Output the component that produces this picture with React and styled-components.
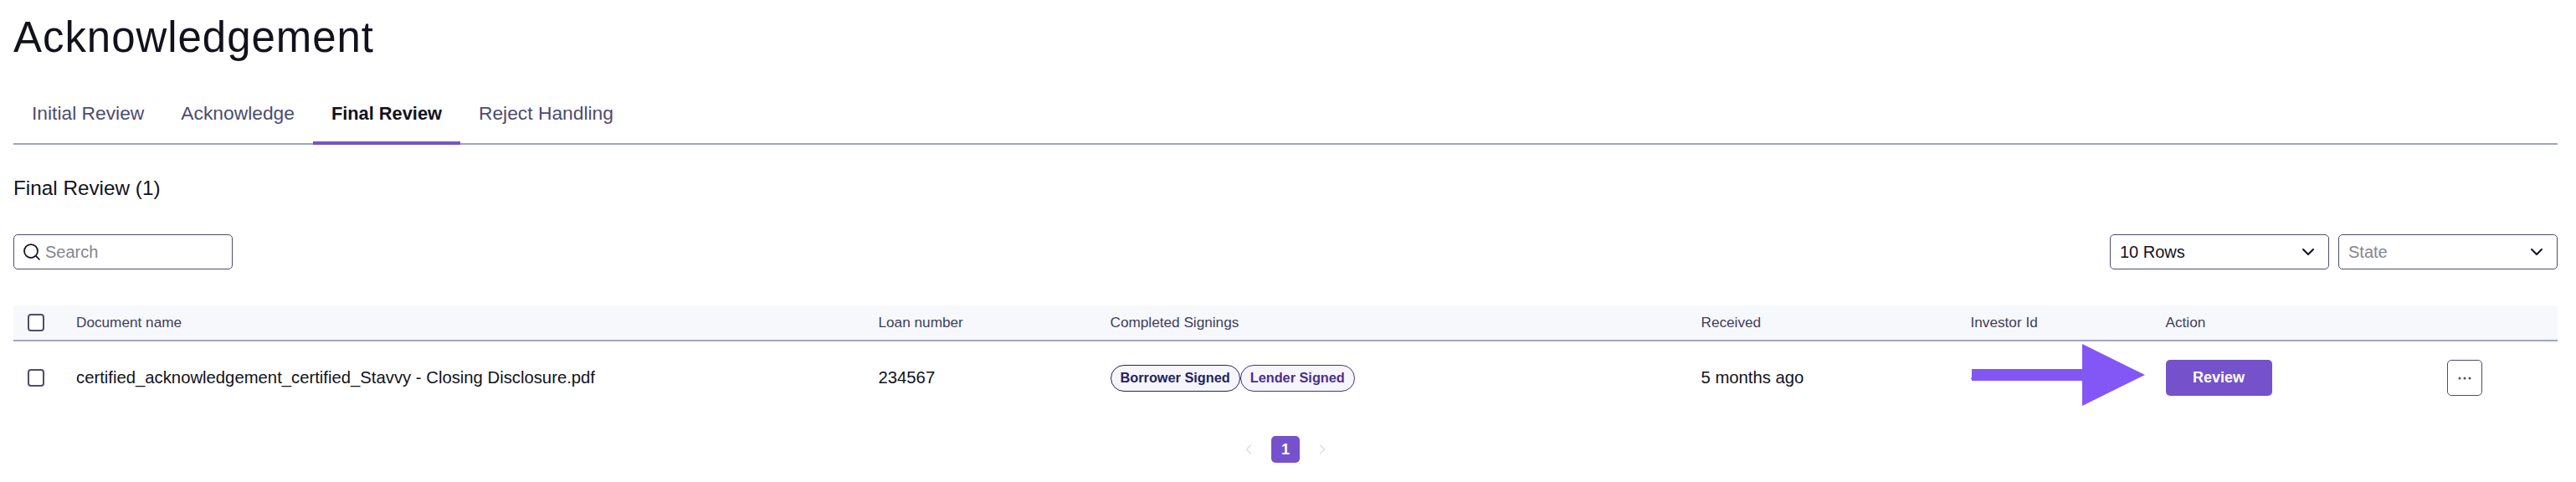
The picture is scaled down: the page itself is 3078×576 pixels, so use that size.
import React from 'react';
import styled, { createGlobalStyle } from 'styled-components';
import { Search, ChevronDown, ChevronLeft, ChevronRight } from 'lucide-react';

const Global = createGlobalStyle`
  html, body { margin: 0; padding: 0; background: #fff; }
  body { font-family: "Liberation Sans", Arial, sans-serif; color: #12121c; }
`;

const Page = styled.main`
  width: 3078px;
  height: 576px;
  box-sizing: border-box;
  padding: 0 22px 0 16px;
  overflow: hidden;
`;

const Title = styled.h1`
  margin: 0;
  height: 90px;
  padding-top: 15px;
  box-sizing: border-box;
  font-size: 51px;
  line-height: 60px;
  font-weight: 400;
  letter-spacing: 0.95px;
  color: #12121c;
`;

const Tabs = styled.nav`
  display: flex;
  height: 83px;
  box-sizing: border-box;
  border-bottom: 2px solid #a0a6c0;
`;

const Tab = styled.div`
  height: 83px;
  box-sizing: border-box;
  padding: ${p => (p.$active ? '12px' : '8px')} 22px 0;
  display: flex;
  align-items: center;
  font-size: ${p => (p.$active ? '21.8px' : '22.8px')};
  font-weight: ${p => (p.$active ? 700 : 400)};
  color: ${p => (p.$active ? '#12121c' : '#4d4c70')};
  border-bottom: ${p => (p.$active ? '4px solid #7552cc' : 'none')};
`;

const SectionTitle = styled.h2`
  margin: 0;
  height: 107px;
  padding-top: 36px;
  box-sizing: border-box;
  font-size: 24.3px;
  line-height: 32px;
  font-weight: 400;
`;

const Toolbar = styled.div`
  display: flex;
  justify-content: space-between;
  height: 85px;
`;

const SearchBox = styled.div`
  width: 262px;
  height: 42px;
  box-sizing: border-box;
  border: 1.5px solid #4d4c70;
  border-radius: 5px;
  display: flex;
  align-items: center;
  gap: 4px;
  padding-left: 9px;
  font-size: 20px;
  color: #85858f;
`;

const Filters = styled.div`
  display: flex;
  gap: 11px;
`;

const Select = styled.div`
  width: 262px;
  height: 42px;
  box-sizing: border-box;
  border: 1.5px solid #4d4c70;
  border-radius: 5px;
  display: flex;
  align-items: center;
  justify-content: space-between;
  padding: 0 12px 0 11px;
  font-size: 20px;
  color: ${p => (p.$placeholder ? '#85858f' : '#12121c')};
`;

const columns = '75px 958.5px 277px 706px 322px 233px 336px 1fr';

const HeaderRow = styled.div`
  display: grid;
  grid-template-columns: ${columns};
  align-items: center;
  height: 43px;
  box-sizing: border-box;
  background: #f7f8fc;
  border-bottom: 2px solid #a0a6c0;
  font-size: 17.2px;
  color: #3f3e5a;
`;

const BodyRow = styled.div`
  position: relative;
  display: grid;
  grid-template-columns: ${columns};
  align-items: center;
  height: 86px;
  padding-top: 1px;
  box-sizing: border-box;
  font-size: 20.3px;
  color: #12121c;
`;

const CheckCell = styled.div`
  padding-left: 17px;
  display: flex;
`;

const Checkbox = styled.span`
  display: block;
  width: 20px;
  height: 21px;
  box-sizing: border-box;
  border: 2px solid #4d4c70;
  border-radius: 4px;
  background: #fff;
`;

const Badges = styled.div`
  display: flex;
`;

const Badge = styled.span`
  height: 32px;
  box-sizing: border-box;
  padding: 0 11px;
  display: inline-flex;
  align-items: center;
  border: 1px solid ${p => p.$color};
  color: ${p => p.$color};
  background: #f6f5fb;
  border-radius: 16px;
  font-size: 16.3px;
  font-weight: 700;
`;

const ReviewButton = styled.button`
  display: block;
  width: 127px;
  height: 43px;
  border: none;
  border-radius: 5px;
  background: #7552cc;
  color: #fff;
  font: 700 18px "Liberation Sans", Arial, sans-serif;
`;

const MoreButton = styled.button`
  width: 42px;
  height: 43px;
  padding: 0;
  border: 1.5px solid #4d4c70;
  border-radius: 5px;
  background: #fff;
  color: #4d4c70;
  display: flex;
  align-items: center;
  justify-content: center;
`;

const Arrow = styled.svg`
  position: absolute;
  left: 2338px;
  top: 3px;
`;

const Pagination = styled.div`
  display: flex;
  justify-content: center;
  align-items: center;
  gap: 17px;
  padding-top: 27px;
  color: #d9dbec;
`;

const PageButton = styled.div`
  width: 34px;
  height: 32px;
  border-radius: 5px;
  background: #7552cc;
  color: #fff;
  display: flex;
  align-items: center;
  justify-content: center;
  font-size: 18px;
  font-weight: 700;
`;

export default function App() {
  return (
    <Page>
      <Global />
      <Title>Acknowledgement</Title>
      <Tabs>
        <Tab>Initial Review</Tab>
        <Tab>Acknowledge</Tab>
        <Tab $active>Final Review</Tab>
        <Tab>Reject Handling</Tab>
      </Tabs>
      <SectionTitle>Final Review (1)</SectionTitle>
      <Toolbar>
        <SearchBox>
          <Search size={24} color="#12121c" strokeWidth={1.75} />
          Search
        </SearchBox>
        <Filters>
          <Select>10 Rows<ChevronDown size={24} color="#12121c" strokeWidth={2} /></Select>
          <Select $placeholder>State<ChevronDown size={24} color="#12121c" strokeWidth={2} /></Select>
        </Filters>
      </Toolbar>
      <HeaderRow>
        <CheckCell><Checkbox /></CheckCell>
        <div>Document name</div>
        <div>Loan number</div>
        <div>Completed Signings</div>
        <div>Received</div>
        <div>Investor Id</div>
        <div>Action</div>
        <div />
      </HeaderRow>
      <BodyRow>
        <CheckCell><Checkbox /></CheckCell>
        <div>certified_acknowledgement_certified_Stavvy - Closing Disclosure.pdf</div>
        <div>234567</div>
        <Badges>
          <Badge $color="#23235f">Borrower Signed</Badge>
          <Badge $color="#4a2f8f">Lender Signed</Badge>
        </Badges>
        <div>5 months ago</div>
        <div>-</div>
        <div><ReviewButton>Review</ReviewButton></div>
        <div>
          <MoreButton>
            <svg width="18" height="6" viewBox="0 0 18 6" fill="currentColor">
              <circle cx="3" cy="3" r="1.5" /><circle cx="9" cy="3" r="1.5" /><circle cx="15" cy="3" r="1.5" />
            </svg>
          </MoreButton>
        </div>
        <Arrow width="209" height="74" viewBox="0 0 209 74" fill="#8257f5">
          <path d="M2 30H134V0L209 37L134 74V44H2Z" />
        </Arrow>
      </BodyRow>
      <Pagination>
        <ChevronLeft size={20} strokeWidth={1.5} />
        <PageButton>1</PageButton>
        <ChevronRight size={20} strokeWidth={1.5} />
      </Pagination>
    </Page>
  );
}
